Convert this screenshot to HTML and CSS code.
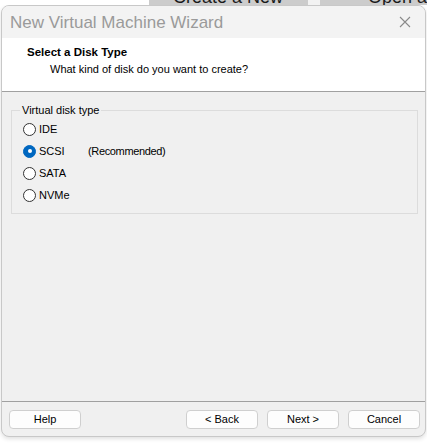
FILE: index.html
```html
<!DOCTYPE html>
<html>
<head>
<meta charset="utf-8">
<link rel="stylesheet" href="styles.css">
</head>
<body>
<div class="desk">
  <div class="tile tile-gap-l"></div>
  <div class="tile tile-a"><span>Create a New</span></div>
  <div class="tile tile-gap"></div>
  <div class="tile tile-b"><span>Open a</span></div>
</div>
<div class="window">
  <div class="titlebar">
    <span class="title">New Virtual Machine Wizard</span>
    <svg class="close" width="12" height="12" viewBox="0 0 12 12"><path d="M1 1L11 11M11 1L1 11" stroke="#8a8a8a" stroke-width="1.1" fill="none"/></svg>
  </div>
  <div class="header">
    <div class="h-title">Select a Disk Type</div>
    <div class="h-sub">What kind of disk do you want to create?</div>
  </div>
  <div class="body">
    <fieldset class="group">
      <legend>Virtual disk type</legend>
      <div class="opt"><span class="radio"></span><span>IDE</span></div>
      <div class="opt"><span class="radio on"></span><span class="lbl-w">SCSI</span><span class="rec">(Recommended)</span></div>
      <div class="opt"><span class="radio"></span><span>SATA</span></div>
      <div class="opt"><span class="radio"></span><span>NVMe</span></div>
    </fieldset>
  </div>
  <div class="footer">
    <button class="btn">Help</button>
    <div class="spacer"></div>
    <button class="btn">&lt; Back</button>
    <button class="btn">Next &gt;</button>
    <button class="btn">Cancel</button>
  </div>
</div>
</body>
</html>
```

FILE: styles.css
```css
html, body { margin: 0; padding: 0; }
body {
  background: #ffffff;
  width: 427px;
  height: 443px;
  overflow: hidden;
  font-family: "Liberation Sans", Arial, sans-serif;
  font-size: 11px;
  color: #000;
}
.desk {
  display: flex;
  height: 5px;
  overflow: hidden;
}
.tile { height: 5px; overflow: hidden; }
.tile-gap-l { width: 149px; background: #ffffff; }
.tile-a { width: 159px; background: #cccccc; }
.tile-gap { width: 12px; background: #f2f2f2; }
.tile-b { flex: 1; background: #cccccc; }
.tile span {
  display: block;
  white-space: nowrap;
  font-size: 18px;
  line-height: 18px;
  margin-top: -12px;
  color: #1a1a1a;
}
.tile-a span { padding-left: 24px; }
.tile-b span { padding-left: 48px; }

.window {
  margin-left: 1px;
  width: 425px;
  height: 432px;
  box-sizing: border-box;
  border: 1px solid #c8c8c8;
  border-radius: 8px;
  overflow: hidden;
  background: #f0f0f0;
  display: flex;
  flex-direction: column;
  box-shadow: 0 2px 4px rgba(0,0,0,0.12);
}
.titlebar {
  height: 32px;
  background: #f3f3f3;
  display: flex;
  align-items: center;
  padding: 0 9px 0 8px;
  flex: none;
}
.title {
  flex: 1;
  white-space: nowrap;
  font-size: 17px;
  color: #9a9a9a;
  padding-top: 1px;
}
.close { margin-right: 5px; }
.header {
  height: 46px;
  background: #ffffff;
  border-bottom: 1px solid #a0a0a0;
  padding: 7px 0 0 25px;
  box-sizing: content-box;
  flex: none;
}
.h-title {
  font-weight: bold;
  font-size: 11.5px;
  line-height: 14px;
}
.h-sub {
  line-height: 14px;
  margin-left: 23px;
  margin-top: 3px;
}
.body {
  flex: 1;
  padding: 12px 7px 0 9px;
}
.group {
  margin: 0;
  border: 1px solid #dcdcdc;
  padding: 2px 0 8px 10px;
  height: 110px;
  box-sizing: border-box;
}
.group legend {
  padding: 0 2px;
  margin-left: -2px;
  color: #000;
}
.opt {
  display: flex;
  align-items: center;
  height: 22px;
}
.radio {
  width: 11px;
  height: 11px;
  border: 1px solid #333;
  border-radius: 50%;
  background: #fff;
  margin: 0 3px 0 1px;
  flex: none;
  position: relative;
}
.radio.on {
  background: #0067c0;
  border-color: #0067c0;
}
.radio.on::after {
  content: "";
  position: absolute;
  left: 3.5px;
  top: 3.5px;
  width: 4px;
  height: 4px;
  border-radius: 50%;
  background: #fff;
}
.lbl-w { width: 49px; }
.rec { letter-spacing: -0.35px; }
.footer {
  flex: none;
  height: 35px;
  border-top: 1px solid #a0a0a0;
  display: flex;
  align-items: flex-start;
  padding: 8px 5px 0 7px;
  gap: 9px;
  box-sizing: border-box;
}
.spacer { flex: 1; }
.btn {
  width: 72px;
  height: 19px;
  background: #fdfdfd;
  border: 1px solid #cfcfcf;
  border-radius: 4px;
  font-family: "Liberation Sans", Arial, sans-serif;
  font-size: 11px;
  color: #000;
  padding: 0;
  line-height: 15px;
}
```
